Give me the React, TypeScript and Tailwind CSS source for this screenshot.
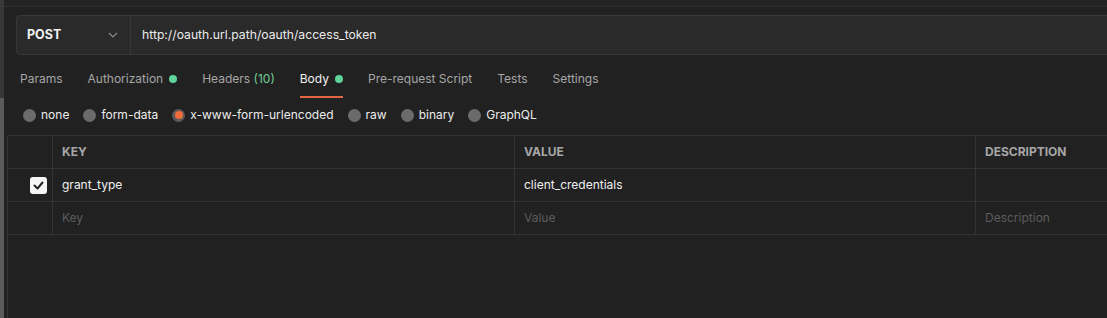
import React from "react";

const Dot = () => <span className="inline-block w-[8px] h-[8px] rounded-full bg-[#5fd39a] ml-[6px]" />;

const Radio = ({ active }: { active?: boolean }) =>
  active ? (
    <span className="w-[13px] h-[13px] rounded-full bg-[#5a5a5a] flex items-center justify-center">
      <span className="w-[8px] h-[8px] rounded-full bg-[#f26b3a]" />
    </span>
  ) : (
    <span className="w-[13px] h-[13px] rounded-full bg-[#6b6b6b]" />
  );

export default function App() {
  const tabs: { label: React.ReactNode; dot?: boolean; active?: boolean }[] = [
    { label: "Params" },
    { label: "Authorization", dot: true },
    { label: <>Headers <span className="text-[#6fcf97]">(10)</span></> },
    { label: "Body", dot: true, active: true },
    { label: "Pre-request Script" },
    { label: "Tests" },
    { label: "Settings" },
  ];
  const radios = [
    { label: "none" },
    { label: "form-data" },
    { label: "x-www-form-urlencoded", active: true },
    { label: "raw" },
    { label: "binary" },
    { label: "GraphQL" },
  ];
  return (
    <div
      className="w-[1107px] h-[318px] bg-[#212121] flex overflow-hidden text-[12px]"
      style={{ fontFamily: "Inter, 'Noto Sans', sans-serif" }}
    >
      <div className="w-[4px] flex flex-col shrink-0">
        <div className="h-[98px] bg-[#383838]" />
        <div className="flex-1 bg-[#5b5b5b]" />
      </div>
      <div className="flex-1 flex flex-col min-w-0">
        <div className="h-[7px] border-b border-[#303030] bg-[#232323]" />
        <div className="pl-[12px] mt-[8px] -mr-[20px]">
          <div className="h-[40px] flex border border-[#383838] rounded-[4px] bg-[#2a2a2a]">
            <div className="w-[114px] flex items-center justify-between pl-[10px] pr-[12px] border-r border-[#383838]">
              <span className="font-bold text-[#f2f2f2] text-[12.5px]">POST</span>
              <svg width="10" height="6" viewBox="0 0 10 6" fill="none">
                <path d="M1 1l4 4 4-4" stroke="#8a8a8a" strokeWidth="1.2" />
              </svg>
            </div>
            <div className="flex items-center pl-[11px] text-[#ececec] text-[12.2px]">
              http://oauth.url.path/oauth/access_token
            </div>
          </div>
        </div>
        <div className="flex pl-[16px] gap-[25px] mt-[5px] h-[40px]">
          {tabs.map((t, i) => (
            <div key={i} className="relative flex items-center pb-[2px]">
              <span className={t.active ? "text-[#f2f2f2]" : "text-[#a6a6a6]"}>{t.label}</span>
              {t.dot && <Dot />}
              {t.active && <span className="absolute left-0 right-0 bottom-[2px] h-[2px] bg-[#e0673f]" />}
            </div>
          ))}
        </div>
        <div className="flex pl-[19px] gap-[14px] items-center h-[30px]">
          {radios.map((r, i) => (
            <div key={i} className="flex items-center gap-[5px]">
              <Radio active={r.active} />
              <span className="text-[#ececec]">{r.label}</span>
            </div>
          ))}
        </div>
        <div className="ml-[3px] mt-[5px] flex-1 border-l border-[#333] -mr-[40px]">
          <div className="flex h-[34px] border-t border-b border-[#333] text-[#a6a6a6] font-bold text-[12px]">
            <div className="w-[45px] border-r border-[#333]" />
            <div className="w-[462px] border-r border-[#333] flex items-center pl-[9px]">KEY</div>
            <div className="w-[461px] border-r border-[#333] flex items-center pl-[9px]">VALUE</div>
            <div className="flex-1 flex items-center pl-[9px]">DESCRIPTION</div>
          </div>
          <div className="flex h-[33px] border-b border-[#333] text-[#f0f0f0]">
            <div className="w-[45px] border-r border-[#333] flex items-center justify-end pr-[5px]">
              <span className="w-[17px] h-[17px] rounded-[3px] bg-[#f5f5f5] flex items-center justify-center">
                <svg width="11" height="9" viewBox="0 0 11 9" fill="none">
                  <path d="M1.5 4.5l3 3 5-6" stroke="#222" strokeWidth="2" strokeLinecap="round" strokeLinejoin="round" />
                </svg>
              </span>
            </div>
            <div className="w-[462px] border-r border-[#333] flex items-center pl-[9px]">grant_type</div>
            <div className="w-[461px] border-r border-[#333] flex items-center pl-[9px]">client_credentials</div>
            <div className="flex-1" />
          </div>
          <div className="flex h-[33px] border-b border-[#333] text-[#5c5c5c]">
            <div className="w-[45px] border-r border-[#333]" />
            <div className="w-[462px] border-r border-[#333] flex items-center pl-[9px]">Key</div>
            <div className="w-[461px] border-r border-[#333] flex items-center pl-[9px]">Value</div>
            <div className="flex-1 flex items-center pl-[9px]">Description</div>
          </div>
        </div>
      </div>
    </div>
  );
}
